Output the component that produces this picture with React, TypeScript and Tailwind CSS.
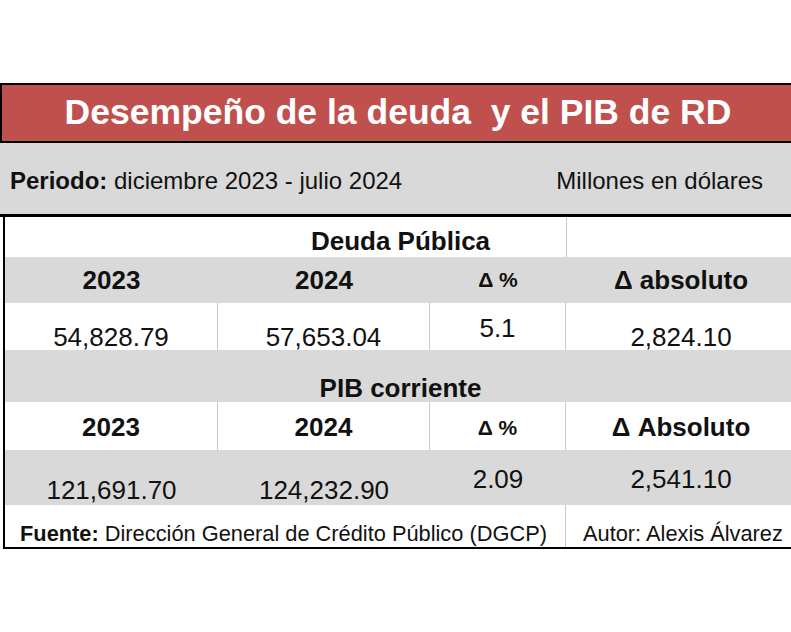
import React from "react";

const F = { fontFamily: '"Liberation Sans", Arial, sans-serif' };

function Cell({ children, pt, className = "" }: { children: React.ReactNode; pt: string; className?: string }) {
  return <div className={`flex justify-center leading-none ${pt} ${className}`}>{children}</div>;
}

export default function App() {
  return (
    <div className="w-[791px] h-[632px] bg-white overflow-hidden pt-[83px] text-[#111]" style={F}>
      <div className="w-[796px]">
        {/* Title */}
        <div className="h-[60px] border-2 border-black bg-[#c0504d] flex items-center justify-center">
          <span className="text-white font-bold text-[35.5px] leading-none whitespace-pre">Desempeño de la deuda  y el PIB de RD</span>
        </div>
        {/* Period band */}
        <div className="h-[71px] bg-[#d9d9d9] flex items-center justify-between pl-[10px] pr-[33px] pt-[4px] text-[24px] leading-none">
          <span>
            <span className="font-bold">Periodo:</span> diciembre 2023 - julio 2024
          </span>
          <span>Millones en dólares</span>
        </div>
        <div className="h-[3px] bg-black" />
        {/* Table */}
        <div className="ml-[3px] border-l-2 border-black border-b-2 border-b-black">
          {/* Row A */}
          <div className="relative h-[40px] bg-white flex justify-center pt-[11px] leading-none">
            <span className="font-bold text-[26px]">Deuda Pública</span>
            <div className="absolute left-[561px] top-0 h-full w-px bg-[#c8c8c8]" />
          </div>
          {/* Row B */}
          <div className="grid grid-cols-[213px_212px_136px_1fr] h-[46px] bg-[#d9d9d9] font-bold">
            <Cell pt="pt-[10px]"><span className="text-[26px]">2023</span></Cell>
            <Cell pt="pt-[10px]"><span className="text-[26px]">2024</span></Cell>
            <Cell pt="pt-[12px]"><span className="text-[21px]">Δ %</span></Cell>
            <Cell pt="pt-[10px]"><span className="text-[26px]">Δ absoluto</span></Cell>
          </div>
          {/* Row C */}
          <div className="grid grid-cols-[213px_212px_136px_1fr] h-[47px] bg-white text-[26px]">
            <Cell pt="pt-[21px]" className="border-r border-[#c8c8c8]">54,828.79</Cell>
            <Cell pt="pt-[21px]" className="border-r border-[#c8c8c8]">57,653.04</Cell>
            <Cell pt="pt-[12px]" className="border-r border-[#c8c8c8]">5.1</Cell>
            <Cell pt="pt-[21px]">2,824.10</Cell>
          </div>
          {/* Row D */}
          <div className="h-[52px] bg-[#d9d9d9] flex justify-center pt-[25px] leading-none">
            <span className="font-bold text-[26px]">PIB corriente</span>
          </div>
          {/* Row E */}
          <div className="grid grid-cols-[213px_212px_136px_1fr] h-[48px] bg-white font-bold">
            <Cell pt="pt-[12px]" className="border-r border-[#c8c8c8]"><span className="text-[26px]">2023</span></Cell>
            <Cell pt="pt-[12px]" className="border-r border-[#c8c8c8]"><span className="text-[26px]">2024</span></Cell>
            <Cell pt="pt-[15px]" className="border-r border-[#c8c8c8]"><span className="text-[21px]">Δ %</span></Cell>
            <Cell pt="pt-[12px]"><span className="text-[26px]">Δ Absoluto</span></Cell>
          </div>
          {/* Row F */}
          <div className="grid grid-cols-[213px_212px_136px_1fr] h-[55px] bg-[#d9d9d9] text-[26px]">
            <Cell pt="pt-[27px]">121,691.70</Cell>
            <Cell pt="pt-[27px]">124,232.90</Cell>
            <Cell pt="pt-[16px]">2.09</Cell>
            <Cell pt="pt-[16px]">2,541.10</Cell>
          </div>
          {/* Row G footer */}
          <div className="grid grid-cols-[561px_1fr] h-[42px] bg-white text-[21.8px] leading-none">
            <div className="border-r border-[#c8c8c8] pt-[18px] pl-[15px] whitespace-nowrap">
              <span className="font-bold">Fuente:</span> Dirección General de Crédito Público (DGCP)
            </div>
            <div className="pt-[18px] pl-[17px] whitespace-nowrap">Autor: Alexis Álvarez</div>
          </div>
        </div>
      </div>
    </div>
  );
}
